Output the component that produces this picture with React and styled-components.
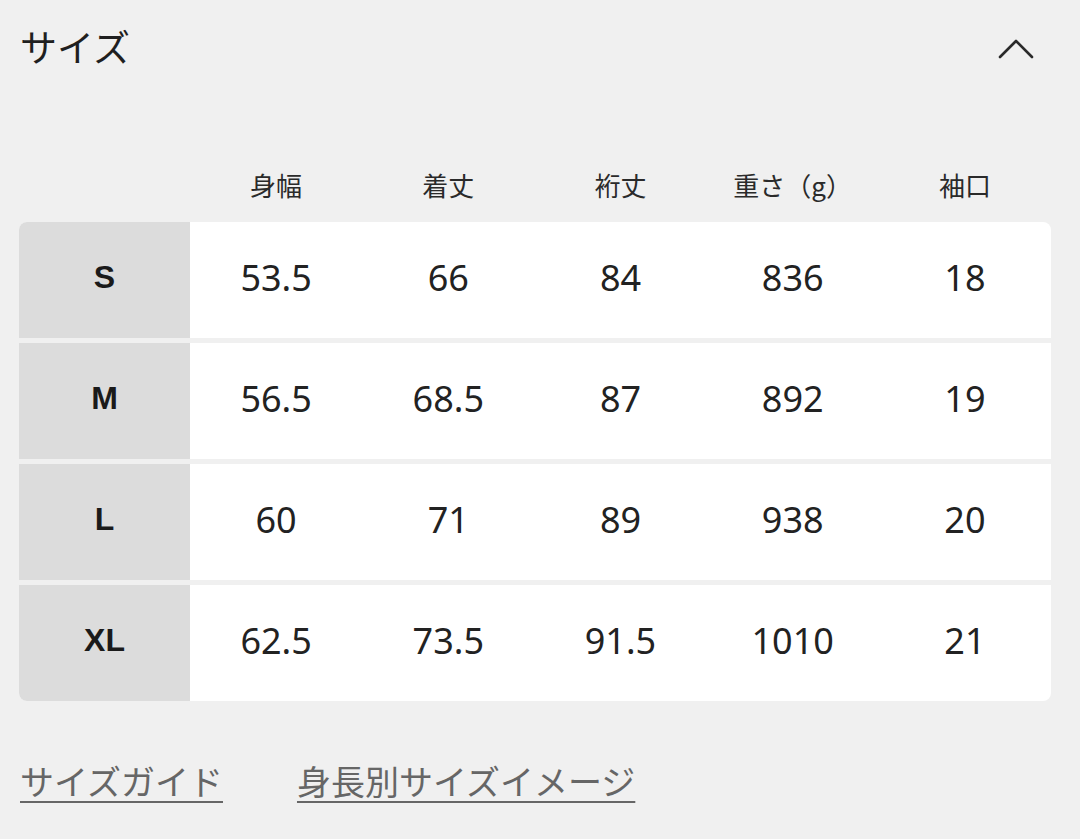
import React from "react";
import styled, { createGlobalStyle } from "styled-components";

const GlobalStyle = createGlobalStyle`
  html, body {
    margin: 0;
    padding: 0;
    background: #f0f0f0;
  }
  body {
    font-family: "Noto Sans CJK JP", "Noto Sans", sans-serif;
    color: #222;
  }
`;

const columns = ["身幅", "着丈", "裄丈", "重さ（g）", "袖口"];

const rows = [
  { size: "S", values: ["53.5", "66", "84", "836", "18"] },
  { size: "M", values: ["56.5", "68.5", "87", "892", "19"] },
  { size: "L", values: ["60", "71", "89", "938", "20"] },
  { size: "XL", values: ["62.5", "73.5", "91.5", "1010", "21"] }
];

const App = () => {
  return (
    <Page>
      <GlobalStyle />
      <Header>
        <Title>サイズ</Title>
        <Chevron width="36" height="22" viewBox="0 0 36 22">
          <polyline points="2,19 18,3 34,19" />
        </Chevron>
      </Header>

      <HeadRow>
        <div />
        {columns.map((c) => (
          <HeadCell key={c}>{c}</HeadCell>
        ))}
      </HeadRow>

      <Table>
        {rows.map((r) => (
          <Row key={r.size}>
            <SizeCell>{r.size}</SizeCell>
            {r.values.map((v, i) => (
              <ValueCell key={i}>{v}</ValueCell>
            ))}
          </Row>
        ))}
      </Table>

      <Links>
        <LinkText>サイズガイド</LinkText>
        <LinkText>身長別サイズイメージ</LinkText>
      </Links>
    </Page>
  );
};

const Page = styled.div`
  width: 1080px;
  height: 839px;
  box-sizing: border-box;
  padding: 0 29px 0 19px;
  overflow: hidden;
`;

const Header = styled.div`
  display: flex;
  align-items: center;
  justify-content: space-between;
  height: 92px;
  padding-left: 1px;
`;

const Title = styled.h2`
  margin: 0;
  font-size: 37px;
  font-weight: 400;
  line-height: 1;
  color: #1f1f1f;
`;

const Chevron = styled.svg`
  margin-right: 17px;
  margin-top: 6px;
  fill: none;
  stroke: #2a2a2a;
  stroke-width: 2.6;
  stroke-linecap: round;
  stroke-linejoin: round;
`;

const HeadRow = styled.div`
  display: grid;
  grid-template-columns: 171px repeat(5, 1fr);
  height: 130px;
  align-items: end;
  padding-bottom: 24px;
  box-sizing: border-box;
`;

const HeadCell = styled.div`
  text-align: center;
  font-size: 26px;
  line-height: 26px;
  color: #2a2a2a;
`;

const Table = styled.div`
  display: flex;
  flex-direction: column;
  gap: 5px;
  border-radius: 8px;
  overflow: hidden;
`;

const Row = styled.div`
  display: grid;
  grid-template-columns: 171px repeat(5, 1fr);
  height: 116px;
  background: #fff;
`;

const SizeCell = styled.div`
  display: flex;
  align-items: center;
  justify-content: center;
  padding-bottom: 6px;
  background: #dcdcdc;
  font-family: "Liberation Sans", Arial, sans-serif;
  font-weight: 700;
  font-size: 32px;
  color: #1a1a1a;
`;

const ValueCell = styled.div`
  display: flex;
  align-items: center;
  justify-content: center;
  padding-bottom: 6px;
  font-family: "Noto Sans", sans-serif;
  font-size: 36px;
  color: #222;
`;

const Links = styled.div`
  display: flex;
  gap: 74px;
  padding-top: 60px;
  padding-left: 1px;
`;

const LinkText = styled.span`
  font-size: 34px;
  line-height: 1.2;
  color: #666;
  text-decoration: underline;
  text-decoration-thickness: 2px;
  text-underline-offset: 6px;
`;

export default App;
